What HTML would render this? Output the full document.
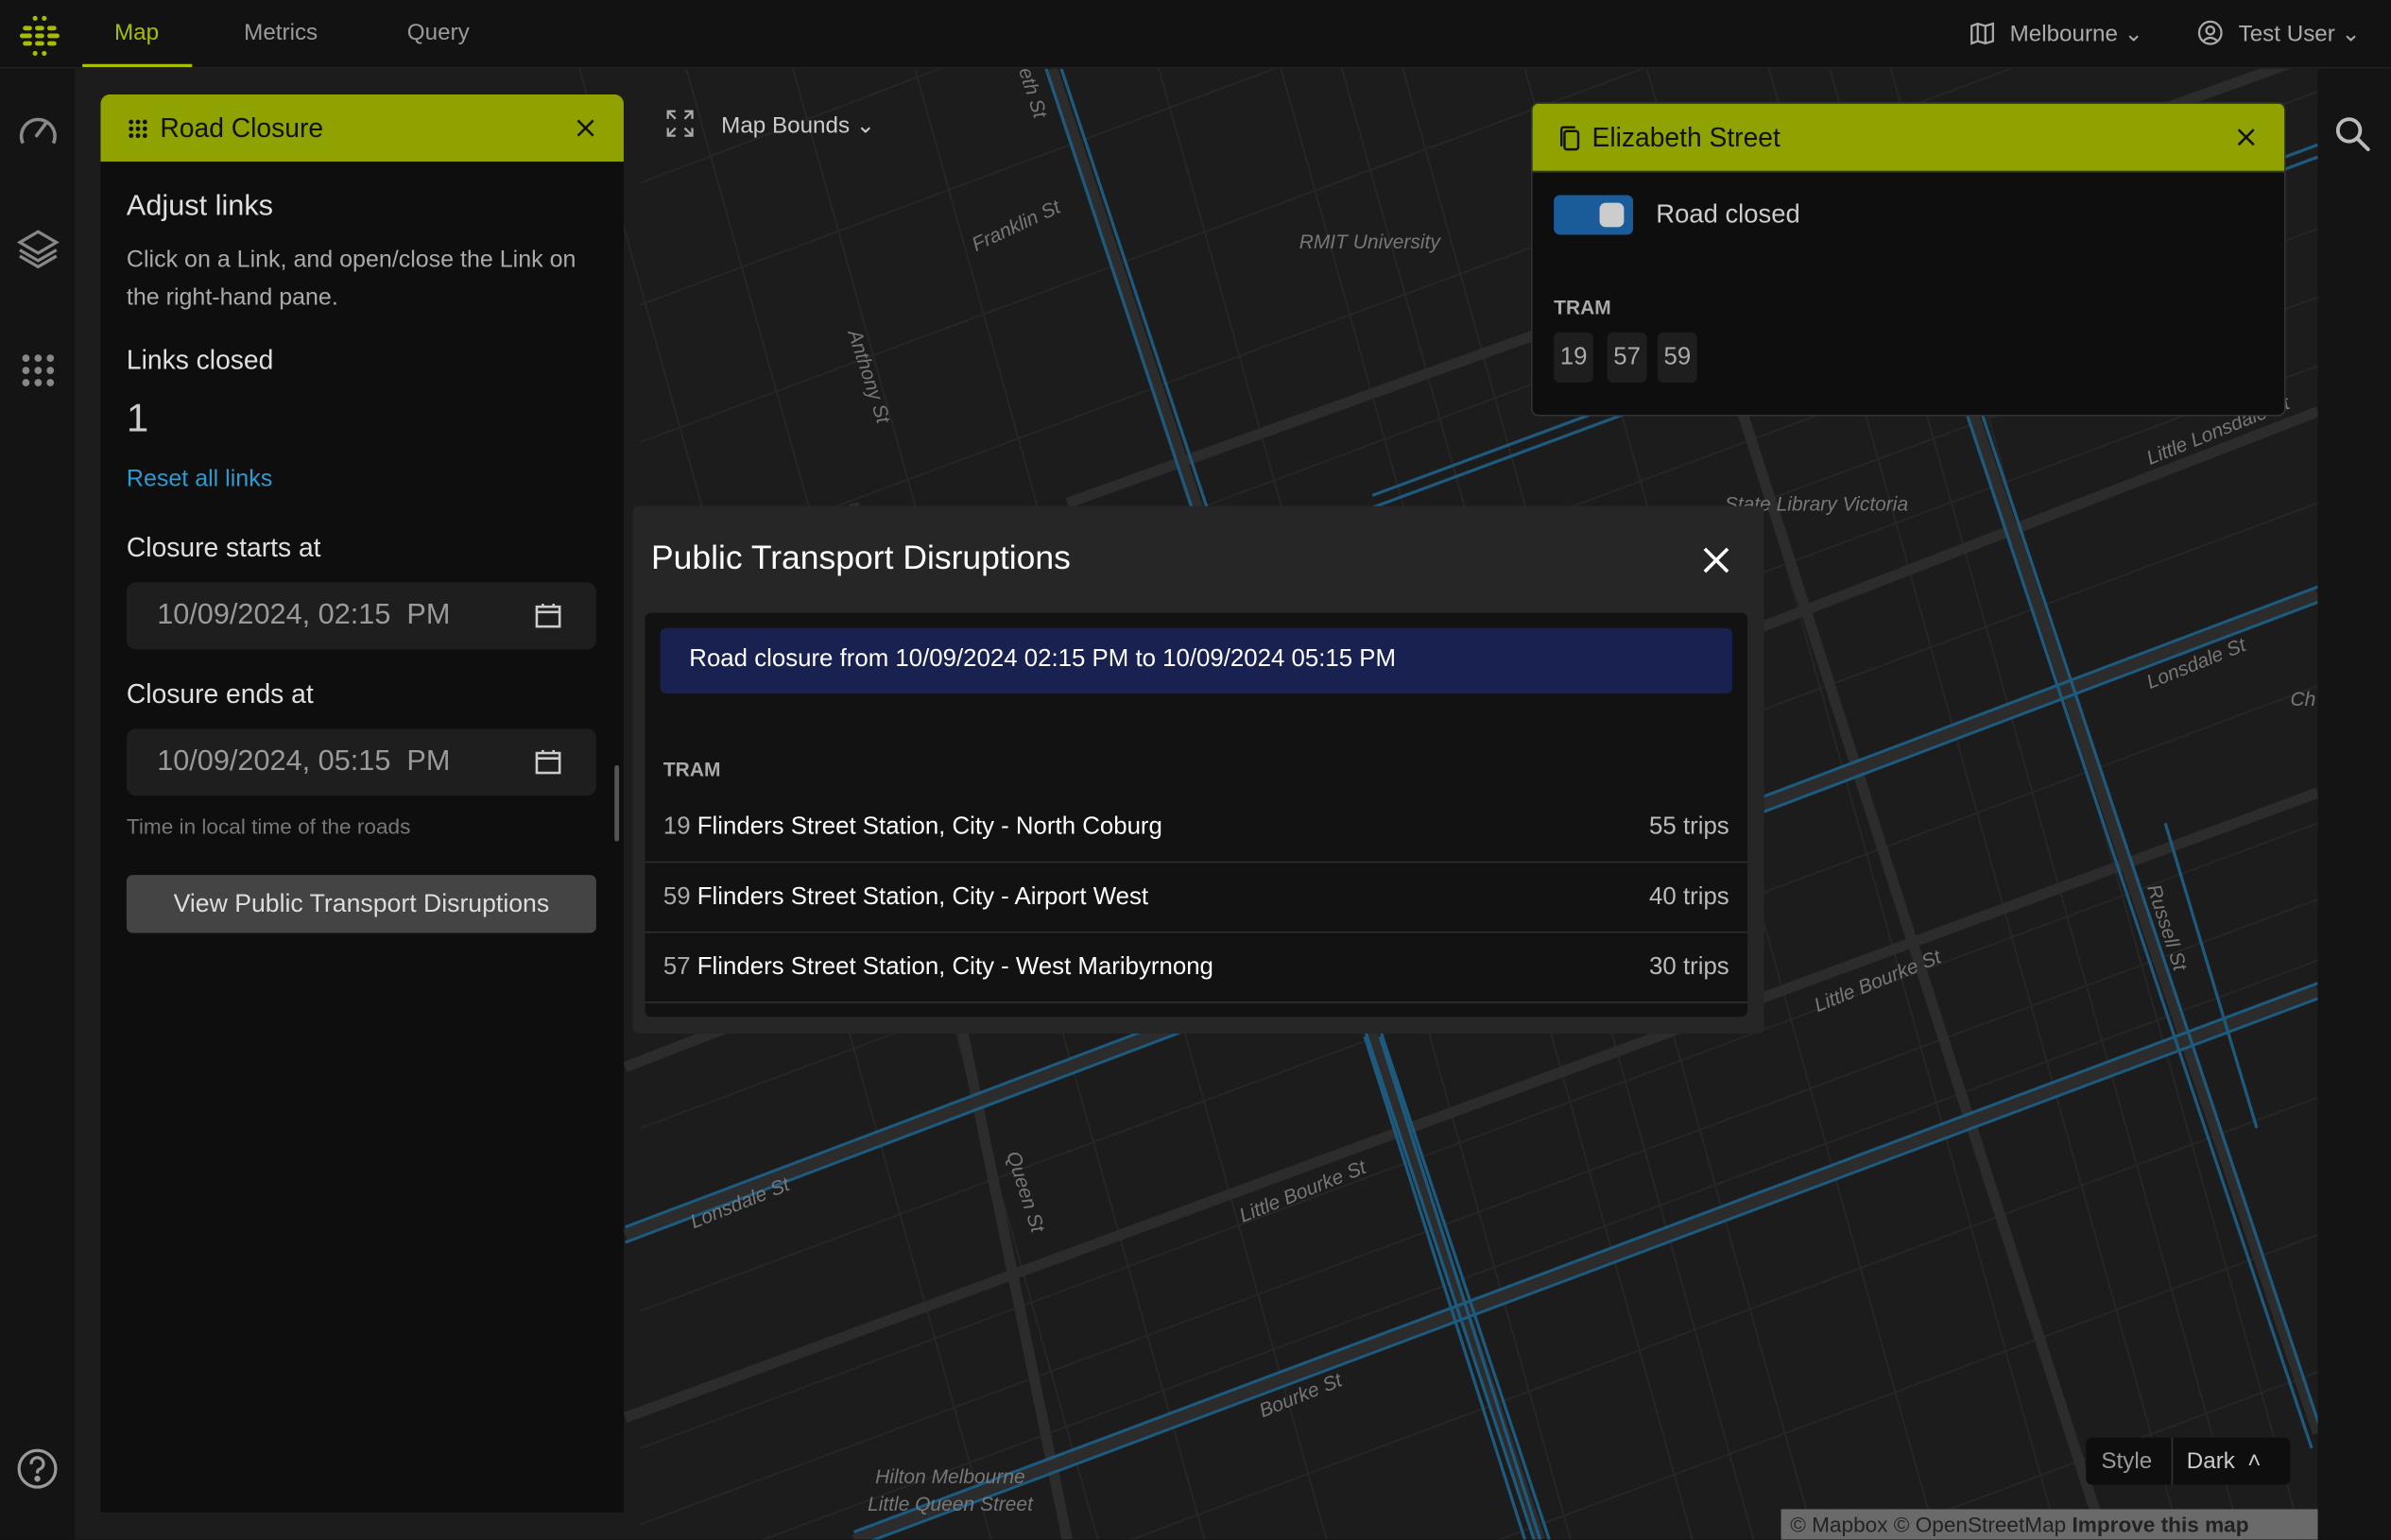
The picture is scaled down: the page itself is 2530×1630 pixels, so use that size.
<!DOCTYPE html>
<html><head><meta charset="utf-8">
<style>
html,body{margin:0;padding:0;background:#121212;overflow:hidden;width:2530px;height:1630px}
#s{position:absolute;left:0;top:0;width:1568px;height:1010px;overflow:hidden;transform:scale(1.6135);transform-origin:0 0;font-family:"Liberation Sans",sans-serif;color:#ddd;background:#121212}
.a{position:absolute}
.top{left:0;top:0;width:1568px;height:44px;background:#121212;border-bottom:1px solid #222}
.tab{top:13px;font-size:15px;color:#9a9a9a}
.side{left:0;top:45px;width:49px;height:965px;background:#141414}
.rside{left:1520px;top:45px;width:48px;height:965px;background:#141414}
.panel{left:66px;top:62px;width:343px;height:930px;background:#0e0e0e;border-radius:6px 6px 0 0}
.hdr{background:#8fa200;color:#111;font-size:17.5px}
.lbl{font-size:17.5px;color:#e0e0e0;left:17px}
.inp{left:17px;width:308px;height:44px;background:#1e1e1e;border-radius:6px;color:#9a9a9a;font-size:19px}
.row{left:8px;width:723px;height:45px;border-bottom:1px solid #2e2e2e;font-size:16px;color:#fff}
.row .n{color:#aaa}
.row .t{position:absolute;right:12px;top:14px;color:#bbb}
.row .l{position:absolute;left:12px;top:14px}
.chip{top:218px;width:26px;height:33px;background:#1e1e1e;border-radius:4px;color:#aaa;font-size:16px;text-align:center;line-height:33px}
</style></head><body><div id="s">
<svg class="a" style="left:49px;top:45px" width="1471" height="965" viewBox="49 45 1471 965">
<rect x="49" y="45" width="1471" height="965" fill="#1c1c1c"/>
<g stroke="#262626" stroke-width="1.2" fill="none">
<path d="M420 120 L1520 -300 M420 200 L1520 -210 M420 290 L1520 -120 M420 380 L1520 -30 M420 470 L1520 60 M420 560 L1520 150 M420 650 L1520 240 M420 740 L1520 330 M420 860 L1520 450 M420 950 L1520 540 M420 1040 L1520 630 M420 1130 L1520 720 M420 1220 L1520 810 M420 1310 L1520 900 M420 600 L1520 195 M420 1000 L1520 590"/>
<path d="M450 45 L720 1010 M520 45 L790 1010 M600 45 L870 1010 M760 45 L1030 1010 M840 45 L1110 1010 M920 45 L1190 1010 M1000 45 L1270 1010 M1080 45 L1350 1010 M1160 45 L1430 1010 M1240 45 L1510 1010 M380 45 L650 1010 M1200 45 L1470 1010 M880 45 L1150 1010"/>
</g>
<g stroke="#2c2c2c" stroke-width="7" fill="none">
<path d="M410 810 L1520 390 M560 1010 L1520 650 M410 930 L1520 520 M700 330 L1520 35 M410 700 L1520 270"/>
<path d="M690 45 L1010 1010 M560 330 L700 1010 M1270 200 L1520 940 M1120 200 L1380 1010"/>
</g>
<g stroke="#1d5a7e" stroke-width="2" fill="none">
<path d="M410 805 L1520 385 M410 815 L1520 395"/>
<path d="M560 1005 L1520 645 M560 1015 L1520 655"/>
<path d="M900 325 L1520 95 M900 333 L1520 103"/>
<path d="M686 45 L1006 1010 M696 45 L1016 1010"/>
<path d="M1266 200 L1516 950 M1276 200 L1526 950"/>
<path d="M1420 540 L1480 740"/>
<path d="M895 680 L1000 1010 M905 680 L1010 1010"/>
</g>
<g fill="#777" font-size="13" font-style="italic">
<text x="640" y="165" transform="rotate(-25 640 165)">Franklin St</text>
<text x="852" y="163">RMIT University</text>
<text x="1131" y="335">State Library Victoria</text>
<text x="1410" y="305" transform="rotate(-22 1410 305)">Little Lonsdale St</text>
<text x="1410" y="452" transform="rotate(-22 1410 452)">Lonsdale St</text>
<text x="1192" y="664" transform="rotate(-22 1192 664)">Little Bourke St</text>
<text x="815" y="802" transform="rotate(-22 815 802)">Little Bourke St</text>
<text x="455" y="806" transform="rotate(-22 455 806)">Lonsdale St</text>
<text x="828" y="930" transform="rotate(-22 828 930)">Bourke St</text>
<text x="660" y="757" transform="rotate(72 660 757)">Queen St</text>
<text x="556" y="218" transform="rotate(72 556 218)">Anthony St</text>
<text x="1408" y="582" transform="rotate(72 1408 582)">Russell St</text>
<text x="668" y="46" transform="rotate(72 668 46)">eth St</text>
<text x="1502" y="463">Ch</text>
<text x="574" y="973">Hilton Melbourne</text>
<text x="569" y="991">Little Queen Street</text>
</g>
</svg>
<div class="a top"></div>
<svg class="a" style="left:12px;top:9px" width="28" height="28" viewBox="0 0 28 28" fill="#a9bd00"><circle cx="11" cy="3" r="1.6"/><circle cx="17" cy="3" r="1.6"/><rect x="3" y="8" width="6" height="3" rx="1.5"/><rect x="11" y="8" width="6" height="3" rx="1.5"/><rect x="19" y="8" width="6" height="3" rx="1.5"/><rect x="1" y="13" width="8" height="3" rx="1.5"/><rect x="11" y="13" width="6" height="3" rx="1.5"/><rect x="19" y="13" width="8" height="3" rx="1.5"/><rect x="3" y="18" width="6" height="3" rx="1.5"/><rect x="11" y="18" width="6" height="3" rx="1.5"/><rect x="19" y="18" width="6" height="3" rx="1.5"/><circle cx="11" cy="26" r="1.6"/><circle cx="17" cy="26" r="1.6"/></svg>
<div class="a tab" style="left:75px;color:#a9bd00">Map</div>
<div class="a" style="left:54px;top:42px;width:72px;height:2px;background:#a9bd00"></div>
<div class="a tab" style="left:160px">Metrics</div>
<div class="a tab" style="left:267px">Query</div>
<svg class="a" style="left:1292px;top:14px" width="16" height="16" viewBox="0 0 16 16" fill="none" stroke="#aaa" stroke-width="1.4"><path d="M1 3 L5 1.5 L10 3 L15 1.5 V13 L10 14.5 L5 13 L1 14.5Z M5 1.5V13 M10 3V14.5"/></svg>
<div class="a tab" style="left:1318px;color:#aaa">Melbourne ⌄</div>
<svg class="a" style="left:1441px;top:13px" width="17" height="17" viewBox="0 0 17 17" fill="none" stroke="#aaa" stroke-width="1.4"><circle cx="8.5" cy="8.5" r="7.3"/><circle cx="8.5" cy="7" r="2.6"/><path d="M3.8 14 Q8.5 9.5 13.2 14"/></svg>
<div class="a tab" style="left:1468px;color:#aaa">Test User ⌄</div>
<div class="a side"></div>
<svg class="a" style="left:11px;top:73px" width="28" height="24" viewBox="0 0 28 24" fill="none" stroke="#888" stroke-width="2.2"><path d="M4 21 A11 11 0 1 1 24 21"/><path d="M13 16 L19 8" stroke-linecap="round"/></svg>
<svg class="a" style="left:11px;top:149px" width="28" height="28" viewBox="0 0 28 28" fill="none" stroke="#888" stroke-width="2"><path d="M14 3 L26 10 L14 17 L2 10Z M2 15 L14 22 L26 15 M2 19 L14 26 L26 19"/></svg>
<svg class="a" style="left:14px;top:232px" width="22" height="22" viewBox="0 0 22 22" fill="#888"><circle cx="3" cy="3" r="2.4"/><circle cx="11" cy="3" r="2.4"/><circle cx="19" cy="3" r="2.4"/><circle cx="3" cy="11" r="2.4"/><circle cx="11" cy="11" r="2.4"/><circle cx="19" cy="11" r="2.4"/><circle cx="3" cy="19" r="2.4"/><circle cx="11" cy="19" r="2.4"/><circle cx="19" cy="19" r="2.4"/></svg>
<svg class="a" style="left:11px;top:950px" width="27" height="27" viewBox="0 0 27 27" fill="none" stroke="#999" stroke-width="2"><circle cx="13.5" cy="13.5" r="12"/><path d="M9.5 10.5 A4 4 0 1 1 14.5 14 Q13.5 14.5 13.5 16.5"/><circle cx="13.5" cy="20" r="1" fill="#999"/></svg>
<div class="a rside"></div>
<svg class="a" style="left:1531px;top:76px" width="24" height="24" viewBox="0 0 24 24" fill="none" stroke="#bbb" stroke-width="2.4"><circle cx="9.5" cy="9.5" r="7.3"/><path d="M15 15 L22 22" stroke-linecap="round"/></svg>
<svg class="a" style="left:437px;top:72px" width="18" height="18" viewBox="0 0 18 18" fill="none" stroke="#aaa" stroke-width="1.4"><path d="M1 6V1H6 M12 1H17V6 M17 12V17H12 M6 17H1V12 M1 1L6 6 M17 1L12 6 M17 17L12 12 M1 17L6 12"/></svg>
<div class="a" style="left:473px;top:73px;font-size:15px;color:#ccc">Map Bounds ⌄</div>
<div class="a panel">
 <div class="a hdr" style="left:0;top:0;width:343px;height:44px;border-radius:6px 6px 0 0"></div>
 <svg class="a" style="left:18px;top:16px" width="13" height="13" viewBox="0 0 13 13" fill="#111"><circle cx="2" cy="2" r="1.5"/><circle cx="6.5" cy="2" r="1.5"/><circle cx="11" cy="2" r="1.5"/><circle cx="2" cy="6.5" r="1.5"/><circle cx="6.5" cy="6.5" r="1.5"/><circle cx="11" cy="6.5" r="1.5"/><circle cx="2" cy="11" r="1.5"/><circle cx="6.5" cy="11" r="1.5"/><circle cx="11" cy="11" r="1.5"/></svg>
 <div class="a" style="left:39px;top:12px;font-size:17.5px;color:#111">Road Closure</div>
 <svg class="a" style="left:312px;top:16px" width="12" height="12" viewBox="0 0 12 12" stroke="#111" stroke-width="1.6"><path d="M1 1L11 11M11 1L1 11"/></svg>
 <div class="a lbl" style="top:63px;font-size:19px">Adjust links</div>
 <div class="a" style="left:17px;top:96px;width:295px;font-size:15.5px;line-height:25px;color:#aaa">Click on a Link, and open/close the Link on the right-hand pane.</div>
 <div class="a lbl" style="top:164px">Links closed</div>
 <div class="a" style="left:17px;top:197px;font-size:26px;color:#ccc">1</div>
 <div class="a" style="left:17px;top:244px;font-size:15.5px;color:#2b9bd6">Reset all links</div>
 <div class="a lbl" style="top:287px">Closure starts at</div>
 <div class="a inp" style="top:320px"><span class="a" style="left:20px;top:11px">10/09/2024, 02:15&nbsp; PM</span><svg class="a" style="left:268px;top:13px" width="17" height="17" viewBox="0 0 17 17" fill="none" stroke="#ccc" stroke-width="1.6"><rect x="1" y="3" width="15" height="13"/><path d="M1 6.5H16 M5 1V3 M12 1V3"/></svg></div>
 <div class="a lbl" style="top:383px">Closure ends at</div>
 <div class="a inp" style="top:416px"><span class="a" style="left:20px;top:11px">10/09/2024, 05:15&nbsp; PM</span><svg class="a" style="left:268px;top:13px" width="17" height="17" viewBox="0 0 17 17" fill="none" stroke="#ccc" stroke-width="1.6"><rect x="1" y="3" width="15" height="13"/><path d="M1 6.5H16 M5 1V3 M12 1V3"/></svg></div>
 <div class="a" style="left:17px;top:472px;font-size:14px;color:#777">Time in local time of the roads</div>
 <div class="a" style="left:17px;top:512px;width:308px;height:38px;background:#444;border-radius:4px;color:#ddd;font-size:16.5px;text-align:center;line-height:38px">View Public Transport Disruptions</div>
 <div class="a" style="left:337px;top:440px;width:3px;height:50px;background:#555;border-radius:2px"></div>
</div>
<div class="a" style="left:1004px;top:67px;width:493px;height:204px;background:#0e0e0e;border:1px solid #333;border-radius:5px;overflow:hidden">
 <div class="a hdr" style="left:0;top:0;width:493px;height:44px;border-bottom:1px solid #333"></div>
 <svg class="a" style="left:16px;top:14px" width="17" height="18" viewBox="0 0 17 18" fill="none" stroke="#111" stroke-width="1.5"><rect x="5" y="4" width="9" height="12" rx="1.5"/><path d="M3 14 V3 Q3 1.5 4.5 1.5 H12"/></svg>
 <div class="a" style="left:39px;top:12px;font-size:17.5px;color:#111">Elizabeth Street</div>
 <svg class="a" style="left:462px;top:16px" width="12" height="12" viewBox="0 0 12 12" stroke="#111" stroke-width="1.6"><path d="M1 1L11 11M11 1L1 11"/></svg>
 <div class="a" style="left:14px;top:60px;width:52px;height:26px;background:#1a5b9a;border-radius:4px"></div>
 <div class="a" style="left:44px;top:65px;width:16px;height:16px;background:#ccc;border-radius:4px"></div>
 <div class="a" style="left:81px;top:63px;font-size:17px;color:#ccc">Road closed</div>
 <div class="a" style="left:14px;top:126px;font-size:13px;font-weight:bold;color:#aaa">TRAM</div>
 <div class="a chip" style="left:14px;top:150px">19</div>
 <div class="a chip" style="left:49px;top:150px">57</div>
 <div class="a chip" style="left:82px;top:150px">59</div>
</div>
<div class="a" style="left:415px;top:332px;width:742px;height:346px;background:#262626;border-radius:4px">
 <div class="a" style="left:12px;top:21px;font-size:22px;color:#fff">Public Transport Disruptions</div>
 <svg class="a" style="left:702px;top:27px" width="17" height="17" viewBox="0 0 17 17" stroke="#fff" stroke-width="2.2"><path d="M1 1L16 16M16 1L1 16"/></svg>
 <div class="a" style="left:8px;top:70px;width:723px;height:265px;background:#121212;border-radius:4px"></div>
 <div class="a" style="left:18px;top:80px;width:703px;height:43px;background:#18214f;border-radius:4px;font-size:16px;color:#fff"><span class="a" style="left:19px;top:12px">Road closure from 10/09/2024 02:15 PM to 10/09/2024 05:15 PM</span></div>
 <div class="a" style="left:20px;top:165px;font-size:13px;font-weight:bold;color:#aaa">TRAM</div>
 <div class="a row" style="top:188px"><span class="l"><span class="n">19</span> Flinders Street Station, City - North Coburg</span><span class="t">55 trips</span></div>
 <div class="a row" style="top:234px"><span class="l"><span class="n">59</span> Flinders Street Station, City - Airport West</span><span class="t">40 trips</span></div>
 <div class="a row" style="top:280px"><span class="l"><span class="n">57</span> Flinders Street Station, City - West Maribyrnong</span><span class="t">30 trips</span></div>
</div>
<div class="a" style="left:1368px;top:943px;width:134px;height:31px;background:#0e0e0e;border-radius:4px;font-size:15px">
 <span class="a" style="left:10px;top:7px;color:#999">Style</span>
 <div class="a" style="left:56px;top:0;width:1px;height:31px;background:#333"></div>
 <span class="a" style="left:66px;top:7px;color:#ccc">Dark&nbsp; ˄</span>
</div>
<div class="a" style="left:1168px;top:990px;width:352px;height:20px;background:#6a6a6a;font-size:14px;color:#222;line-height:20px;white-space:nowrap;overflow:hidden"><span style="margin-left:6px">© Mapbox © OpenStreetMap <b>Improve this map</b></span></div>
</div></body></html>
